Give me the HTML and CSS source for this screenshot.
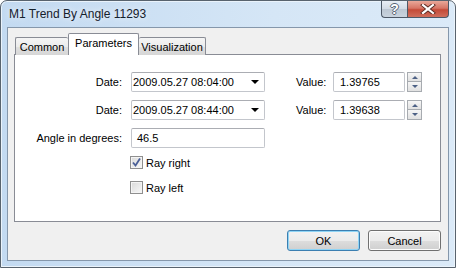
FILE: index.html
```html
<!DOCTYPE html>
<html lang="en">
  <head>
    <meta charset="utf-8">
    <title>M1 Trend By Angle 11293</title>
    <link rel="stylesheet" href="styles.css">
  </head>
  <body>
    <div class="window">
      <div class="titlebar">
        <span class="title">M1 Trend By Angle 11293</span>
        <div class="caption">
          <span class="cap help">?</span>
          <span class="cap close">
            <svg width="16" height="10" viewBox="0 0 16 10">
              <path d="M3 1 L13 9 M13 1 L3 9" stroke="#5a2a22" stroke-width="4" stroke-linecap="square"/>
              <path d="M3 1 L13 9 M13 1 L3 9" stroke="#fff" stroke-width="2.2" stroke-linecap="square"/>
            </svg>
          </span>
        </div>
      </div>
      <div class="client">
        <div class="tabs">
          <div class="tab common">Common</div>
          <div class="tab params active">Parameters</div>
          <div class="tab visual">Visualization</div>
        </div>
        <div class="panel">
          <div class="row">
            <label class="lbl">Date:</label>
            <div class="combo"><span>2009.05.27 08:04:00</span><i class="arrow"></i></div>
            <label class="lbl2">Value:</label>
            <div class="edit value">1.39765</div>
            <div class="spin"><span class="up"></span><span class="down"></span></div>
          </div>
          <div class="row">
            <label class="lbl">Date:</label>
            <div class="combo"><span>2009.05.27 08:44:00</span><i class="arrow"></i></div>
            <label class="lbl2">Value:</label>
            <div class="edit value">1.39638</div>
            <div class="spin"><span class="up"></span><span class="down"></span></div>
          </div>
          <div class="row">
            <label class="lbl">Angle in degrees:</label>
            <div class="edit angle">46.5</div>
          </div>
          <div class="check first">
            <span class="box">
              <svg width="11" height="11" viewBox="0 0 11 11">
                <path d="M2 5.5 L4.5 8.5 L9 1.5" fill="none" stroke="#4a5f97" stroke-width="1.8"/>
              </svg>
            </span>
            <span>Ray right</span>
          </div>
          <div class="check">
            <span class="box"></span>
            <span>Ray left</span>
          </div>
        </div>
        <div class="footer">
          <button class="btn default">OK</button>
          <button class="btn">Cancel</button>
        </div>
      </div>
    </div>
  </body>
</html>
```

FILE: styles.css
```css
body{
  margin: 0;
  background: #fff;
  font-family: "Liberation Sans", Arial, sans-serif;
  font-size: 11px;
  color: #000;
}
.window{
  box-sizing: border-box;
  width: 456px;
  height: 268px;
  border: 1px solid #58636e;
  border-radius: 7px 7px 0 0;
  padding: 0 6px 6px 6px;
  background: linear-gradient(to right, #c3daf1, #d5e6f6 60%, #dbeaf8);
  box-shadow: inset 0 0 0 1px #eaf3fb;
  display: flex;
  flex-direction: column;
}
.titlebar{
  height: 26px;
  display: flex;
  align-items: flex-start;
}
.title{
  margin: 6px 0 0 2px;
  font-size: 12px;
  color: #14202c;
  text-shadow: 0 0 6px #fff;
}
.caption{
  margin-left: auto;
  display: flex;
}
.cap{
  height: 17px;
  box-sizing: border-box;
  display: flex;
  align-items: center;
  justify-content: center;
  border: 1px solid #4d5866;
  border-top: none;
}
.help{
  width: 26px;
  border-radius: 0 0 0 4px;
  border-right: none;
  background: linear-gradient(to bottom, #e8eef5, #d2dbe5 50%, #bcc7d3 51%, #c9d3de);
  color: #fff;
  font-size: 14px;
  font-weight: bold;
  text-shadow: -1px 0 #596574, 1px 0 #596574, 0 -1px #596574, 0 1px #596574;
}
.close{
  width: 42px;
  border-radius: 0 0 4px 0;
  background: linear-gradient(to bottom, #e9a899, #d67565 45%, #c44a37 55%, #d06e5c);
}
.client{
  flex: 1;
  border: 1px solid #8597ab;
  background: #f0f0f0;
  padding: 6px 7px 0 6px;
  display: flex;
  flex-direction: column;
}
.tabs{
  display: flex;
  align-items: flex-end;
  height: 21px;
  margin-bottom: -1px;
  position: relative;
  z-index: 1;
}
.tab{
  box-sizing: border-box;
  height: 18px;
  border: 1px solid #898c95;
  border-bottom: none;
  background: linear-gradient(to bottom, #f5f5f5, #ececec 50%, #e0e0e0 51%, #d6d6d6);
  text-align: center;
  line-height: 19px;
  border-radius: 2px 2px 0 0;
}
.common{
  width: 53px;
  margin-left: 1px;
  border-right: none;
}
.params{
  width: 71px;
}
.visual{
  width: 67px;
  border-left: none;
}
.tab.active{
  height: 22px;
  background: #fff;
  line-height: 18px;
  padding-bottom: 3px;
}
.panel{
  box-sizing: border-box;
  height: 168px;
  border: 1px solid #898c95;
  background: #fff;
  padding: 17px 0 0 0;
}
.row{
  display: flex;
  align-items: center;
  height: 20px;
  margin-bottom: 8px;
}
.lbl{
  width: 107px;
  text-align: right;
  margin-right: 9px;
}
.lbl2{
  width: 37px;
  margin-left: 31px;
}
.combo, .edit{
  box-sizing: border-box;
  height: 20px;
  border: 1px solid #c3c6cc;
  border-top-color: #abadb3;
  border-radius: 2px;
  background: #fff;
  display: flex;
  align-items: center;
}
.combo{
  width: 134px;
  padding-left: 1px;
}
.arrow{
  margin-left: auto;
  margin-right: 5px;
  width: 0;
  height: 0;
  border-left: 4px solid transparent;
  border-right: 4px solid transparent;
  border-top: 4px solid #000;
}
.value{
  width: 72px;
  padding-left: 6px;
}
.angle{
  width: 134px;
  padding-left: 5px;
}
.spin{
  width: 15px;
  height: 20px;
  margin-left: 2px;
  display: flex;
  flex-direction: column;
}
.spin span{
  box-sizing: border-box;
  height: 10px;
  border: 1px solid #a7abb0;
  background: linear-gradient(to bottom, #f6f6f6, #e1e1e1);
  display: flex;
  align-items: center;
  justify-content: center;
}
.spin .down{
  border-top: none;
}
.spin .up::after{
  content: "";
  border-left: 3px solid transparent;
  border-right: 3px solid transparent;
  border-bottom: 3px solid #4d6185;
}
.spin .down::after{
  content: "";
  border-left: 3px solid transparent;
  border-right: 3px solid transparent;
  border-top: 3px solid #4d6185;
}
.check{
  display: flex;
  align-items: center;
  height: 17px;
  padding-left: 115px;
  margin-top: 8px;
}
.check.first{
  margin-top: -2px;
}
.box{
  box-sizing: border-box;
  width: 13px;
  height: 13px;
  border: 1px solid #8f8f8f;
  background: linear-gradient(135deg, #d9d9d9, #f8f8f8);
  box-shadow: inset 0 0 0 1px #f4f4f4;
  margin-right: 3px;
  display: flex;
  align-items: center;
  justify-content: center;
}
.footer{
  display: flex;
  justify-content: flex-end;
  gap: 8px;
  padding-top: 8px;
}
.btn{
  box-sizing: border-box;
  width: 73px;
  height: 21px;
  font-family: inherit;
  font-size: 11px;
  color: #000;
  border: 1px solid #707070;
  border-radius: 3px;
  background: linear-gradient(to bottom, #f2f2f2, #ebebeb 50%, #dddddd 51%, #cfcfcf);
  box-shadow: inset 0 0 0 1px #fcfcfc;
  padding: 0;
}
.btn.default{
  border-color: #3c7fb1;
  box-shadow: inset 0 0 0 1px #8fd4f5;
}
```
